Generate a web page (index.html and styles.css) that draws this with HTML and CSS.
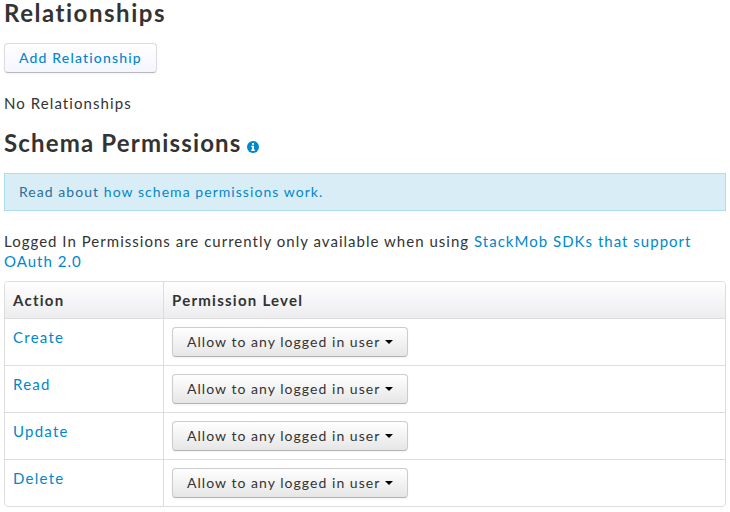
FILE: index.html
```
<!DOCTYPE html>
<html lang="en">
<head>
<meta charset="utf-8">
<title>Schema</title>
<link rel="stylesheet" href="styles.css">
</head>
<body>
<h3 class="first">Relationships</h3>
<a class="btn add">Add Relationship</a>
<p class="none">No Relationships</p>
<h3 class="perm">Schema Permissions <svg class="info" viewBox="0 0 12 12"><circle cx="6" cy="6" r="6" fill="#0088cc"/><path d="M5 2h2v1.7H5zM4.2 4.8H7v3.8h.9V10H4.2V8.6h.9V6h-.9z" fill="#fff"/></svg></h3>
<div class="alert">Read about <a>how schema permissions work.</a></div>
<p class="note">Logged In Permissions are currently only available when using <a>StackMob SDKs that support OAuth 2.0</a></p>
<table>
<thead><tr><th class="action">Action</th><th class="level">Permission Level</th></tr></thead>
<tbody>
<tr><td><a>Create</a></td><td><span class="btn">Allow to any logged in user<i class="caret"></i></span></td></tr>
<tr><td><a>Read</a></td><td><span class="btn">Allow to any logged in user<i class="caret"></i></span></td></tr>
<tr><td><a>Update</a></td><td><span class="btn">Allow to any logged in user<i class="caret"></i></span></td></tr>
<tr><td><a>Delete</a></td><td><span class="btn">Allow to any logged in user<i class="caret"></i></span></td></tr>
</tbody>
</table>
</body>
</html>
```
FILE: styles.css
```
* { box-sizing: border-box; }
body {
  margin: 0;
  padding: 0 4px;
  font: 15px/20px Lato, "Liberation Sans", sans-serif;
  letter-spacing: 1.02px;
  color: #333;
  background: #fff;
}
h3 { margin: 0; font-size: 24px; line-height: 40px; }
h3.first { line-height: 26px; height: 43px; letter-spacing: 1.53px; }
a { color: #0088cc; }
.btn {
  display: flex;
  align-items: center;
  width: 236px;
  height: 30px;
  padding: 0 14px;
  font-size: 14px;
  letter-spacing: 1.04px;
  white-space: nowrap;
  border: 1px solid #ccc;
  border-bottom-color: #b3b3b3;
  border-radius: 4px;
  background: linear-gradient(#fff, #e6e6e6);
  box-shadow: 0 1px 2px rgba(0, 0, 0, .05);
}
.add {
  width: 153px;
  font-weight: 500;
  letter-spacing: 1.17px;
  background: linear-gradient(#fff, #f5f5ff);
  border-color: #dcdce0;
  border-bottom-color: #b8b8bc;
}
.none { margin: 20px 0 10px; letter-spacing: 1.08px; }
.perm { letter-spacing: 1.17px; }
.info { width: 12px; height: 12px; margin-left: -2px; vertical-align: -1px; }
.alert {
  height: 38px;
  margin: 10px 0 20px;
  padding: 8px 14px;
  font-size: 14px;
  letter-spacing: 1.05px;
  color: #2c6f98;
  background: #d9edf7;
  border: 1px solid #addfe9;
}
.note { margin: 0 0 10px; }
table {
  width: 722px;
  table-layout: fixed;
  border-collapse: separate;
  border-spacing: 0;
  border: 1px solid #ddd;
  border-radius: 4px;
}
th, td { padding: 8px; text-align: left; vertical-align: top; }
td { letter-spacing: 1.25px; }
th { height: 36px; letter-spacing: 1.25px; background: linear-gradient(#fff, #ededf0); }
th.action { width: 158px; border-top-left-radius: 3px; }
th.level { border-top-right-radius: 3px; }
td { height: 47px; border-top: 1px solid #ddd; }
th + th, td + td { border-left: 1px solid #ddd; }
.caret { margin-left: 5px; border: 4px solid transparent; border-top-color: #000; border-bottom: 0; }
```
